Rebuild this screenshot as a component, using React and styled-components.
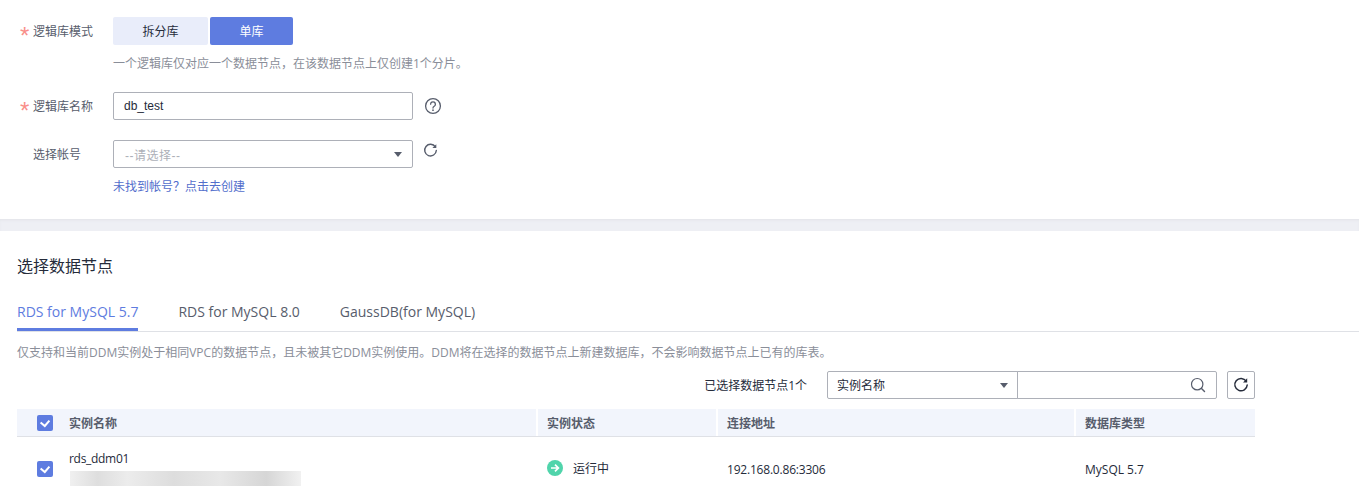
import React from 'react'
import styled, { createGlobalStyle } from 'styled-components'

const GlobalStyle = createGlobalStyle`
  html, body {
    margin: 0;
    padding: 0;
    background: #fff;
  }
  body {
    font-family: "Open Sans", "Noto Sans CJK SC", sans-serif;
    font-size: 12px;
    color: #252b3a;
  }
`

// Styles
const Page = styled.div`
  width: 1359px;
  height: 496px;
  overflow: hidden;
`

const FormPanel = styled.div`
  height: 219px;
  padding: 17px 0 0 20px;
  box-sizing: border-box;
  display: flex;
  flex-direction: column;
`

const FormRow = styled.div`
  display: flex;
  margin-bottom: ${props => props.gap || 0}px;
`

const Label = styled.div`
  width: 93px;
  height: 28px;
  line-height: 30px;
  color: #575d6c;
  display: flex;
`

const Star = styled.span`
  width: 13px;
  height: 28px;
  color: #f98f8a;
  font-family: "Liberation Sans", sans-serif;
  font-size: 24px;
  line-height: 37px;
`

const FieldColumn = styled.div`
  display: flex;
  flex-direction: column;
`

const ModeGroup = styled.div`
  display: flex;
  gap: 2px;
`

const ModeButton = styled.div`
  width: ${props => props.width}px;
  height: 28px;
  line-height: 30px;
  text-align: center;
  border-radius: 2px;
  background: ${props => (props.$active ? '#5e7ce0' : '#e9edfa')};
  color: ${props => (props.$active ? '#fff' : '#252b3a')};
`

const Hint = styled.div`
  margin-top: 11px;
  line-height: 16px;
  color: #8a8e99;
`

const TextField = styled.div`
  width: 300px;
  height: 28px;
  box-sizing: border-box;
  border: 1px solid #adb0b8;
  border-radius: 2px;
  padding: 0 10px 0 ${props => (props.$placeholder ? 11 : 10)}px;
  display: flex;
  align-items: center;
  justify-content: space-between;
  font-family: "Liberation Sans", "Noto Sans CJK SC", sans-serif;
  letter-spacing: ${props => (props.$placeholder ? '0.5px' : '0')};
  color: ${props => (props.$placeholder ? '#adb0b8' : '#252b3a')};
`

const Caret = styled.span`
  width: 0;
  height: 0;
  border-left: 4px solid transparent;
  border-right: 4px solid transparent;
  border-top: 5px solid #575d6c;
`

const FieldWithIcon = styled.div`
  display: flex;
  gap: ${props => props.gap}px;
  align-items: ${props => props.align || 'center'};
`

const IconSlot = styled.div`
  margin-top: 3px;
  display: flex;
`

const CreateLink = styled.div`
  margin-top: 11px;
  line-height: 16px;
  color: #526ecc;
`

const Divider = styled.div`
  height: 12px;
  background: #eeeff4;
  box-shadow: inset 0 2px 3px -1px #e2e3e8;
`

const NodePanel = styled.div`
  padding: 26px 0 0 17px;
`

const Title = styled.div`
  font-size: 16px;
  line-height: 18px;
  color: #252b3a;
`

const Tabs = styled.div`
  margin-top: 26px;
  height: 30px;
  display: flex;
  gap: 40px;
  border-bottom: 1px solid #dfe1e6;
`

const Tab = styled.div`
  height: 30px;
  box-sizing: border-box;
  font-size: 14px;
  line-height: 22px;
  color: ${props => (props.$active ? '#5e7ce0' : '#575d6c')};
  border-bottom: 3px solid ${props => (props.$active ? '#5e7ce0' : 'transparent')};
`

const Note = styled.div`
  margin-top: 13px;
  line-height: 16px;
  color: #8a8e99;
`

const Toolbar = styled.div`
  width: 1238px;
  height: 28px;
  margin-top: 10px;
  display: flex;
  align-items: center;
  justify-content: flex-end;
`

const SelectedCount = styled.div`
  margin-right: 20px;
  color: #252b3a;
`

const FilterSelect = styled.div`
  width: 191px;
  height: 28px;
  box-sizing: border-box;
  border: 1px solid #adb0b8;
  border-radius: 2px 0 0 2px;
  padding: 0 9px;
  display: flex;
  align-items: center;
  justify-content: space-between;
`

const SearchBox = styled.div`
  width: 200px;
  height: 28px;
  margin-left: -1px;
  box-sizing: border-box;
  border: 1px solid #adb0b8;
  border-radius: 0 2px 2px 0;
  padding-right: 10px;
  display: flex;
  align-items: center;
  justify-content: flex-end;
`

const RefreshButton = styled.div`
  width: 28px;
  height: 28px;
  margin-left: 10px;
  box-sizing: border-box;
  border: 1px solid #adb0b8;
  border-radius: 2px;
  display: flex;
  align-items: center;
  justify-content: center;
`

const Table = styled.div`
  width: 1238px;
  margin-top: 10px;
`

const HeaderRow = styled.div`
  height: 28px;
  box-sizing: border-box;
  display: grid;
  grid-template-columns: 519px 180px 358px 181px;
  background: #f2f5fc;
  border-bottom: 1px solid #dfe1e6;
`

const HeaderCell = styled.div`
  display: flex;
  align-items: center;
  padding-left: ${props => props.pad || 9}px;
  font-weight: 600;
  color: #575d6c;
  border-left: ${props => (props.$first ? 'none' : '2px solid #fff')};
`

const BodyRow = styled.div`
  height: 64px;
  display: grid;
  grid-template-columns: 519px 180px 358px 181px;
`

const BodyCell = styled.div`
  display: flex;
  align-items: center;
  padding-left: 11px;
  height: 64px;
  box-sizing: border-box;
  letter-spacing: ${props => props.spacing || 0}px;
  color: #252b3a;
`

const NameCell = styled.div`
  display: flex;
  align-items: center;
  padding-left: 20px;
  height: 64px;
`

const Check = styled.div`
  width: 16px;
  height: 16px;
  flex: none;
  border-radius: 2px;
  background: #5e7ce0;
  display: flex;
  align-items: center;
  justify-content: center;
  margin-right: 16px;
`

const NameStack = styled.div`
  display: flex;
  flex-direction: column;
`

const NameText = styled.div`
  line-height: 16px;
  letter-spacing: -0.3px;
  color: #252b3a;
`

const BlurredId = styled.div`
  width: 231px;
  height: 15px;
  margin: 4px 0 1px 1px;
  background: linear-gradient(90deg, #f0f0f0 0%, #dedede 12%, #ececec 25%, #dddddd 45%, #e8e8e8 65%, #d6d6d6 85%, #f1f1f1 100%);
`

const Status = styled.div`
  display: flex;
  align-items: center;
  gap: 10px;
  margin-top: -2px;
`

// Icons
const RefreshIcon = ({ size = 16, color = '#575d6c', weight = 1.5 }) => (
  <svg width={size} height={size} viewBox="0 0 16 16" fill="none">
    <path d="M13.2 4.2A6.2 6.2 0 1 0 14.2 8" stroke={color} strokeWidth={weight} strokeLinecap="round" />
    <path d="M14.2 1.2v4.2H10z" fill={color} />
  </svg>
)

const HelpIcon = () => (
  <svg width="18" height="18" viewBox="0 0 18 18" fill="none">
    <circle cx="9" cy="9" r="7.4" stroke="#575d6c" strokeWidth="1.3" />
    <path d="M6.6 7.2a2.4 2.4 0 1 1 3.6 2.1c-.8.5-1.2.9-1.2 1.8" stroke="#575d6c" strokeWidth="1.3" strokeLinecap="round" />
    <circle cx="9" cy="13.2" r=".85" fill="#575d6c" />
  </svg>
)

const SearchIcon = () => (
  <svg width="16" height="16" viewBox="0 0 16 16" fill="none">
    <circle cx="7.2" cy="7.2" r="5.7" stroke="#575d6c" strokeWidth="1.2" />
    <path d="M11.5 11.5l3 3" stroke="#575d6c" strokeWidth="1.4" strokeLinecap="round" />
  </svg>
)

const CheckMark = () => (
  <svg width="12" height="10" viewBox="0 0 12 10" fill="none">
    <path d="M1.6 4.4l4.2 3.6 4.6-5.4" stroke="#fff" strokeWidth="2" />
  </svg>
)

const RunningIcon = () => (
  <svg width="16" height="16" viewBox="0 0 16 16">
    <circle cx="8" cy="8" r="8" fill="#50d4ab" />
    <path d="M4 8h7M8 4.6L11.4 8 8 11.4" fill="none" stroke="#fff" strokeWidth="1.7" />
  </svg>
)

// Component
const App = () => (
  <Page>
    <GlobalStyle />
    <FormPanel>
      <FormRow gap={20}>
        <Label><Star>*</Star>逻辑库模式</Label>
        <FieldColumn>
          <ModeGroup>
            <ModeButton width={95}>拆分库</ModeButton>
            <ModeButton width={83} $active>单库</ModeButton>
          </ModeGroup>
          <Hint>一个逻辑库仅对应一个数据节点，在该数据节点上仅创建1个分片。</Hint>
        </FieldColumn>
      </FormRow>
      <FormRow gap={20}>
        <Label><Star>*</Star>逻辑库名称</Label>
        <FieldWithIcon gap={11}>
          <TextField>db_test</TextField>
          <HelpIcon />
        </FieldWithIcon>
      </FormRow>
      <FormRow>
        <Label><Star />选择帐号</Label>
        <FieldColumn>
          <FieldWithIcon gap={10} align="flex-start">
            <TextField $placeholder>
              --请选择--
              <Caret />
            </TextField>
            <IconSlot>
              <RefreshIcon size={15} />
            </IconSlot>
          </FieldWithIcon>
          <CreateLink>未找到帐号？点击去创建</CreateLink>
        </FieldColumn>
      </FormRow>
    </FormPanel>
    <Divider />
    <NodePanel>
      <Title>选择数据节点</Title>
      <Tabs>
        <Tab $active>RDS for MySQL 5.7</Tab>
        <Tab>RDS for MySQL 8.0</Tab>
        <Tab>GaussDB(for MySQL)</Tab>
      </Tabs>
      <Note>仅支持和当前DDM实例处于相同VPC的数据节点，且未被其它DDM实例使用。DDM将在选择的数据节点上新建数据库，不会影响数据节点上已有的库表。</Note>
      <Toolbar>
        <SelectedCount>已选择数据节点1个</SelectedCount>
        <FilterSelect>
          实例名称
          <Caret />
        </FilterSelect>
        <SearchBox>
          <SearchIcon />
        </SearchBox>
        <RefreshButton>
          <RefreshIcon color="#252b3a" />
        </RefreshButton>
      </Toolbar>
      <Table>
        <HeaderRow>
          <HeaderCell $first pad={20}>
            <Check><CheckMark /></Check>
            实例名称
          </HeaderCell>
          <HeaderCell>实例状态</HeaderCell>
          <HeaderCell>连接地址</HeaderCell>
          <HeaderCell>数据库类型</HeaderCell>
        </HeaderRow>
        <BodyRow>
          <NameCell>
            <Check><CheckMark /></Check>
            <NameStack>
              <NameText>rds_ddm01</NameText>
              <BlurredId />
            </NameStack>
          </NameCell>
          <BodyCell>
            <Status>
              <RunningIcon />
              运行中
            </Status>
          </BodyCell>
          <BodyCell spacing={-0.2}>192.168.0.86:3306</BodyCell>
          <BodyCell>MySQL 5.7</BodyCell>
        </BodyRow>
      </Table>
    </NodePanel>
  </Page>
)

export default App
